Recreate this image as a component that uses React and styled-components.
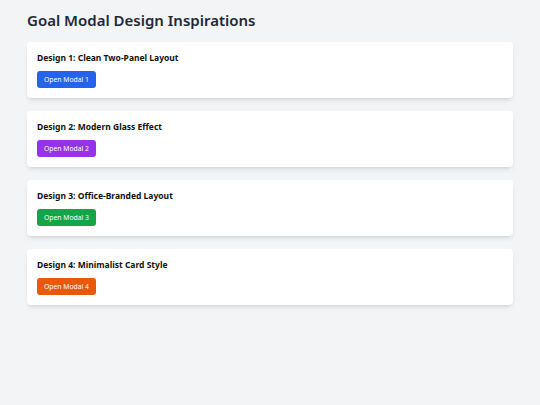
import styled, { createGlobalStyle } from 'styled-components'

const designs = [
    { title: 'Design 1: Clean Two-Panel Layout', color: '#2563eb' },
    { title: 'Design 2: Modern Glass Effect', color: '#9333ea' },
    { title: 'Design 3: Office-Branded Layout', color: '#16a34a' },
    { title: 'Design 4: Minimalist Card Style', color: '#ea580c' },
]

const GlobalStyle = createGlobalStyle`
    html, body {
        margin: 0;
        padding: 0;
        background: #f3f4f6;
        font-family: 'Noto Sans', sans-serif;
    }
`

function App() {
    return (
        <Page>
            <GlobalStyle />
            <Title>Goal Modal Design Inspirations</Title>
            <List>
                {designs.map(({ title, color }, index) => (
                    <Card key={index}>
                        <CardTitle>{title}</CardTitle>
                        <OpenButton $color={color}>Open Modal {index + 1}</OpenButton>
                    </Card>
                ))}
            </List>
        </Page>
    )
}

export default App

const Page = styled.div`
    min-height: 405px;
    box-sizing: border-box;
    padding: 10px 27px 27px;
    background: #f3f4f6;
`

const Title = styled.h1`
    margin: 0 0 12px;
    font-size: 15px;
    line-height: 20px;
    font-weight: 600;
    color: #1f2937;
`

const List = styled.div`
    display: flex;
    flex-direction: column;
    gap: 13px;
`

const Card = styled.div`
    display: flex;
    flex-direction: column;
    align-items: flex-start;
    gap: 7px;
    background: white;
    border-radius: 4px;
    box-shadow: 0 3px 5px -1px rgba(0, 0, 0, 0.1), 0 2px 3px -2px rgba(0, 0, 0, 0.1);
    padding: 10px;
    height: 56px;
    box-sizing: border-box;
`

const CardTitle = styled.h2`
    margin: 0;
    font-size: 8.5px;
    line-height: 12px;
    font-weight: 700;
    color: #111;
`

const OpenButton = styled.button`
    display: block;
    border: none;
    border-radius: 3px;
    background: ${p => p.$color};
    color: white;
    font-family: 'Noto Sans', sans-serif;
    font-size: 6.8px;
    line-height: 17px;
    height: 17px;
    padding: 0 7px;
    cursor: pointer;
`
